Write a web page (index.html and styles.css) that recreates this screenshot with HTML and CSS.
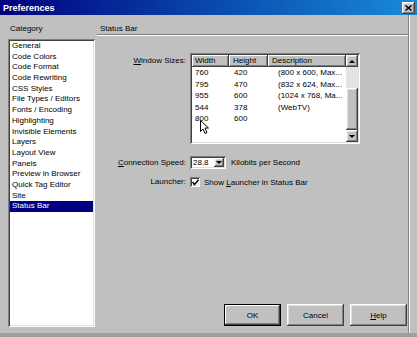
FILE: index.html
```html
<!DOCTYPE html>
<html lang="en">
<head>
  <meta charset="UTF-8">
  <meta name="viewport" content="width=device-width, initial-scale=1.0">
  <title>Preferences</title>
  <link rel="stylesheet" href="styles.css">
</head>
<body>
  <div class="window">
    <div class="titlebar">
      <span class="title">Preferences</span>
      <span class="close raised">
        <svg width="7" height="6" viewBox="0 0 7 6"><path d="M0.5 0.5 L6.5 5.5 M6.5 0.5 L0.5 5.5" stroke="#000" stroke-width="1.4"/></svg>
      </span>
    </div>

    <div class="client">
      <div class="sidebar">
        <div class="caption">Category</div>
        <ul class="list sunken">
          <li>General</li>
          <li>Code Colors</li>
          <li>Code Format</li>
          <li>Code Rewriting</li>
          <li>CSS Styles</li>
          <li>File Types / Editors</li>
          <li>Fonts / Encoding</li>
          <li>Highlighting</li>
          <li>Invisible Elements</li>
          <li>Layers</li>
          <li>Layout View</li>
          <li>Panels</li>
          <li>Preview in Browser</li>
          <li>Quick Tag Editor</li>
          <li>Site</li>
          <li class="selected">Status Bar</li>
        </ul>
      </div>

      <div class="panel">
        <div class="panel-head">Status Bar</div>

        <div class="row row-sizes">
          <label class="lbl lbl-top"><u>W</u>indow Sizes:</label>
          <div class="sizes sunken">
            <div class="sizes-list">
              <div class="th">Width</div>
              <div class="th">Height</div>
              <div class="th th-desc">Description</div>
              <div class="rows" id="size-rows"></div>
            </div>
            <div class="vscroll">
              <span class="sbtn raised"><i class="tri tri-up"></i></span>
              <span class="track"></span>
              <span class="thumb raised"></span>
              <span class="sbtn raised"><i class="tri tri-down"></i></span>
            </div>
            <svg class="cursor" width="11" height="15" viewBox="0 0 11 15">
              <path d="M0.5 0.5 L0.5 11.5 L3 9 L5 13.5 L7 12.5 L5 8 L8.5 8 Z" fill="#fff" stroke="#000" stroke-width="1"/>
            </svg>
          </div>
        </div>

        <div class="row row-speed">
          <label class="lbl"><u>C</u>onnection Speed:</label>
          <div class="combo sunken">
            <span class="combo-val">28.8</span>
            <span class="combo-btn raised"><i class="tri tri-down"></i></span>
          </div>
          <span class="unit">Kilobits per Second</span>
        </div>

        <div class="row row-launch">
          <label class="lbl">Launcher:</label>
          <span class="checkbox sunken">
            <svg width="7" height="7" viewBox="0 0 7 7"><path d="M0.5 3 L2.5 5.5 L6.5 0.8" fill="none" stroke="#000" stroke-width="1.5"/></svg>
          </span>
          <span class="check-text">Show <u>L</u>auncher in Status Bar</span>
        </div>

        <div class="buttons">
          <button class="btn btn-default">OK</button>
          <button class="btn">Cancel</button>
          <button class="btn"><u>H</u>elp</button>
        </div>
      </div>
    </div>

    <div class="bottom-strip"></div>
  </div>

  <script>
    const sizeRows = document.getElementById('size-rows');
    const sizes = [
      ['760', '420', '(800 x 600, Max...'],
      ['795', '470', '(832 x 624, Max...'],
      ['955', '600', '(1024 x 768, Ma...'],
      ['544', '378', '(WebTV)'],
      ['800', '600', '']
    ];

    sizes.forEach(s => {
      sizeRows.innerHTML += `
        <div class="td td-w">${s[0]}</div>
        <div class="td td-h">${s[1]}</div>
        <div class="td td-d">${s[2]}</div>
      `;
    });
  </script>
</body>
</html>
```

FILE: styles.css
```css
body {
  margin: 0;
  font-family: "Liberation Sans", Arial, sans-serif;
  font-size: 8px;
  color: #000;
  background-color: #c0c0c0;
  overflow: hidden;
}

u {
  text-decoration: underline;
  text-underline-offset: 1px;
}

.window {
  width: 417px;
  height: 337px;
  background-color: #c0c0c0;
}

.raised {
  box-shadow: inset -1px -1px #404040, inset 1px 1px #fff, inset -2px -2px #808080, inset 2px 2px #dfdfdf;
  background-color: #c0c0c0;
}

.sunken {
  box-shadow: inset 1px 1px #808080, inset -1px -1px #fff, inset 2px 2px #404040, inset -2px -2px #dfdfdf;
}

/* title bar */

.titlebar {
  height: 15px;
  display: flex;
  align-items: center;
  justify-content: space-between;
  padding: 0 2px 0 3px;
  background: linear-gradient(to right, #00007e, #0a4fb0 55%, #1a8ad8);
}

.title {
  color: #fff;
  font-weight: bold;
  font-size: 9px;
}

.close {
  width: 13px;
  height: 12px;
  display: flex;
  align-items: center;
  justify-content: center;
}

/* client */

.client {
  display: flex;
  width: 408px;
  height: 318px;
  border-right: 1px solid #808080;
  box-shadow: 1px 0 #fff;
}

.sidebar {
  padding: 8px 0 0 8px;
  width: 87px;
}

.caption {
  height: 11px;
  line-height: 11px;
  padding-left: 2px;
  margin-bottom: 5px;
}

.list {
  list-style: none;
  margin: 0;
  padding: 2px;
  height: 288px;
  box-sizing: border-box;
  background-color: #fff;
}

.list li {
  height: 10.7px;
  line-height: 10.7px;
  padding-left: 2px;
  white-space: nowrap;
}

.list li.selected {
  background-color: #000080;
  color: #fff;
}

.panel {
  flex: 1;
  display: flex;
  flex-direction: column;
  padding-top: 8px;
}

.panel-head {
  height: 11px;
  line-height: 11px;
  margin: 0 0 0 2px;
  padding-left: 3px;
  border-bottom: 1px solid #808080;
  box-shadow: 0 1px #fff;
}

.row {
  display: flex;
  align-items: center;
}

.lbl {
  width: 91px;
  margin-right: 4px;
  text-align: right;
  white-space: nowrap;
  line-height: 10px;
}

.lbl-top {
  align-self: flex-start;
  padding-top: 3px;
}

.row-sizes {
  margin-top: 18px;
}

.row-speed {
  margin-top: 12px;
  height: 13px;
}

.row-launch {
  margin-top: 7px;
  height: 12px;
}

/* window sizes list */

.sizes {
  position: relative;
  display: flex;
  width: 170px;
  height: 91px;
  padding: 2px;
  box-sizing: border-box;
  background-color: #fff;
}

.sizes-list {
  flex: 1;
  display: grid;
  grid-template-columns: 37px 39px 78px;
  grid-template-rows: 12px auto;
  align-content: start;
}

.th {
  height: 12px;
  line-height: 12px;
  padding-left: 3px;
  box-shadow: inset -1px -1px #404040, inset 1px 1px #fff, inset -2px -2px #808080;
  background-color: #c0c0c0;
  white-space: nowrap;
}

.th + .th {
  padding-left: 4px;
}

.th-desc {
  padding-left: 5px;
}

.rows {
  display: contents;
}

.td {
  height: 11.5px;
  line-height: 11.5px;
  white-space: nowrap;
  overflow: hidden;
}

.td-w {
  padding-left: 3px;
}

.td-h {
  padding-left: 5px;
}

.td-d {
  padding-left: 10px;
}

.vscroll {
  width: 12px;
  display: flex;
  flex-direction: column;
}

.sbtn {
  height: 12px;
  display: flex;
  align-items: center;
  justify-content: center;
}

.track {
  height: 21px;
  background-color: #e4e4e4;
}

.thumb {
  flex: 1;
}

.tri {
  width: 0;
  height: 0;
  border-left: 3px solid transparent;
  border-right: 3px solid transparent;
}

.tri-up {
  border-bottom: 3px solid #000;
}

.tri-down {
  border-top: 3px solid #000;
}

.cursor {
  position: absolute;
  left: 10px;
  top: 67px;
}

/* connection speed */

.combo {
  display: flex;
  align-items: center;
  width: 36px;
  height: 13px;
  padding: 2px;
  box-sizing: border-box;
  background-color: #fff;
}

.combo-val {
  flex: 1;
  padding-left: 1px;
  line-height: 9px;
}

.combo-btn {
  width: 10px;
  height: 9px;
  display: flex;
  align-items: center;
  justify-content: center;
}

.unit {
  margin-left: 5px;
}

/* launcher */

.checkbox {
  width: 10px;
  height: 10px;
  display: flex;
  align-items: center;
  justify-content: center;
  background-color: #fff;
}

.check-text {
  margin-left: 4px;
}

/* buttons */

.buttons {
  margin-top: auto;
  display: flex;
  justify-content: flex-end;
  gap: 6px;
  padding: 0 1px 7px 0;
}

.btn {
  width: 57px;
  height: 22px;
  padding: 0;
  border: none;
  font-family: "Liberation Sans", Arial, sans-serif;
  font-size: 8px;
  color: #000;
  background-color: #c0c0c0;
  box-shadow: inset -1px -1px #404040, inset 1px 1px #fff, inset -2px -2px #808080, inset 2px 2px #dfdfdf;
}

.btn-default {
  box-shadow: inset 0 0 0 1px #000, inset -2px -2px #404040, inset 2px 2px #fff, inset -3px -3px #808080;
}

.bottom-strip {
  height: 4px;
  background-color: #a0a0a0;
}
```
